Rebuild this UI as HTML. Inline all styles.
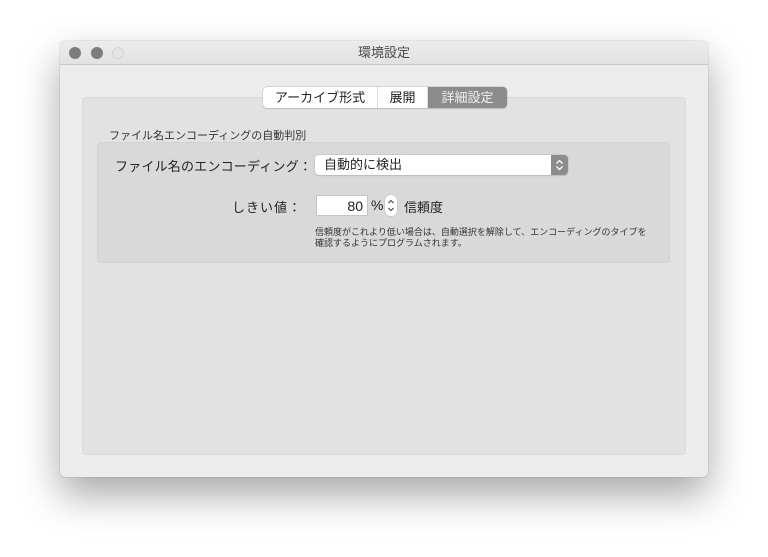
<!DOCTYPE html>
<html><head><meta charset="utf-8"><style>
*{margin:0;padding:0;box-sizing:border-box}
body{width:768px;height:557px;background:#fff;position:relative;overflow:hidden;font-family:"Liberation Sans","Noto Sans CJK JP",sans-serif;color:#222}
.win{position:absolute;left:60px;top:41px;width:648px;height:436px;background:#ececec;border-radius:5px;box-shadow:0 18px 40px rgba(0,0,0,.35),0 0 1px rgba(0,0,0,.4)}
.title{position:absolute;left:0;top:0;width:648px;height:24px;background:linear-gradient(#ececec,#e2e2e2);border-bottom:1px solid #c8c8c8;border-radius:5px 5px 0 0;text-align:center;font-size:13px;line-height:24px;color:#4a4a4a}
.dot{position:absolute;top:6px;width:12px;height:12px;border-radius:50%;background:#7d7d7d}
.box{position:absolute;left:22px;top:56px;width:604px;height:358px;background:#e2e2e2;border-radius:4px;border:1px solid #dadada}
.tabs{position:absolute;left:203px;top:46px;height:21px;display:flex;background:#fff;border-radius:4px;box-shadow:0 0 0 .5px #bbb,0 1px 1px rgba(0,0,0,.15);font-size:13px;line-height:21px;overflow:hidden}
.tabs div{text-align:center;border-right:1px solid #ddd}
.tabs .sel{background:#8c8c8c;color:#f0f0f0;border:none}
.lbl{position:absolute;font-size:11px;color:#333;white-space:nowrap}
.grp{position:absolute;left:37px;top:101px;width:573px;height:121px;background:#d9d9d9;border-radius:4px;border:1px solid #d2d2d2}
.t13{position:absolute;font-size:13px;color:#222;white-space:nowrap}
.pop{position:absolute;left:255px;top:114px;width:253px;height:20px;background:#fff;border-radius:4px;box-shadow:0 0 0 .5px #bbb,0 1px 1px rgba(0,0,0,.15);font-size:13px;line-height:20px;padding-left:9px}
.arr{position:absolute;right:0;top:0;width:17px;height:20px;background:#8c8c8c;border-radius:0 4px 4px 0}
.fld{position:absolute;left:256px;top:154px;width:52px;height:21px;background:#fff;border:1px solid #c4c4c4;font-size:14px;line-height:20px;text-align:right;padding-right:4px}
.step{position:absolute;left:325px;top:154px;width:12px;height:21px;background:#fff;border-radius:5px;box-shadow:0 0 0 .5px #bbb}
.small{position:absolute;left:255px;top:186px;font-size:9px;line-height:11px;color:#333;white-space:nowrap}
</style></head><body>
<div class="win">
<div class="title">環境設定</div>
<div class="dot" style="left:9px"></div><div class="dot" style="left:31px"></div><div class="dot" style="left:52px;background:#e4e4e4;border:1px solid #d4d4d4"></div>
<div class="box"></div>
<div class="tabs"><div style="width:115px">アーカイブ形式</div><div style="width:50px">展開</div><div class="sel" style="width:79px">詳細設定</div></div>
<div class="lbl" style="left:49px;top:86px">ファイル名エンコーディングの自動判別</div>
<div class="grp"></div>
<div class="t13" style="left:55px;top:115px;letter-spacing:.2px">ファイル名のエンコーディング：</div>
<div class="pop">自動的に検出<div class="arr"><svg width="17" height="20"><path d="M5.5 8.5L8.5 5.5L11.5 8.5M5.5 11.5L8.5 14.5L11.5 11.5" stroke="#fff" stroke-width="1.3" fill="none"/></svg></div></div>
<div class="t13" style="left:172px;top:156px;letter-spacing:1px">しきい値：</div>
<div class="fld">80</div>
<div class="t13" style="left:311px;top:156px;font-size:14px">%</div>
<div class="step"><svg width="12" height="21"><path d="M3.5 8L6 5.5L8.5 8M3.5 13L6 15.5L8.5 13" stroke="#444" stroke-width="1.1" fill="none"/></svg></div>
<div class="t13" style="left:344px;top:156px">信頼度</div>
<div class="small">信頼度がこれより低い場合は、自動選択を解除して、エンコーディングのタイプを<br>確認するようにプログラムされます。</div>
</div>
</body></html>
